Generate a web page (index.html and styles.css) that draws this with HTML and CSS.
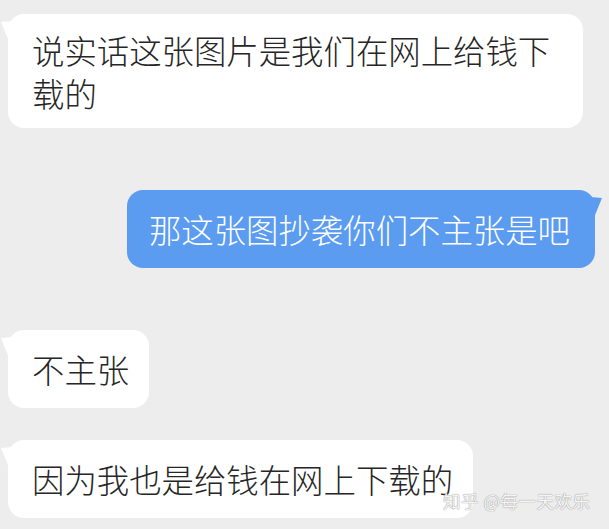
FILE: index.html
```html
<!DOCTYPE html>
<html lang="zh-CN">
<head>
    <meta charset="UTF-8">
    <meta name="viewport" content="width=device-width, initial-scale=1.0">
    <title>聊天记录</title>
    <link rel="stylesheet" href="styles.css">
</head>
<body>
    <div id="chat">
        <div class="row left">
            <div class="bubble multi">说实话这张图片是我们在网上给钱下载的</div>
        </div>
        <div class="row right">
            <div class="bubble">那这张图抄袭你们不主张是吧</div>
        </div>
        <div class="row left">
            <div class="bubble">不主张</div>
        </div>
        <div class="row left follow">
            <div class="bubble">因为我也是给钱在网上下载的</div>
        </div>
    </div>
    <div class="watermark">知乎 @每一天欢乐</div>
</body>
</html>
```

FILE: styles.css
```css
/* styles.css */
body {
    margin: 0;
    background-color: #ededed;
    font-family: "Noto Sans CJK SC", "Noto Sans", sans-serif;
    overflow: hidden;
}

#chat {
    display: flex;
    flex-direction: column;
    padding: 14px 14px 0 8px;
}

.row {
    display: flex;
    margin-top: 62px;
}

.row:first-child {
    margin-top: 0;
}

.row.follow {
    margin-top: 32px;
}

.row.right {
    justify-content: flex-end;
}

.bubble {
    position: relative;
    box-sizing: border-box;
    max-width: 575px;
    padding: 17px 20px 18px 24px;
    border-radius: 16px;
    font-size: 32.4px;
    font-weight: 300;
    line-height: 43px;
    color: #262626;
    background-color: #ffffff;
}

.bubble.multi {
    padding-top: 14px;
    padding-bottom: 14px;
}

.left .bubble::before {
    content: "";
    position: absolute;
    left: -7px;
    top: 7px;
    width: 12px;
    height: 30px;
    background-color: #ffffff;
    clip-path: path('M0,1 L12,0 L12,30 Q6,16 0,1 Z');
}

.right .bubble {
    padding: 17px 25px 18px 22px;
    color: #ffffff;
    background-color: #5b9cf0;
}

.right .bubble::after {
    content: "";
    position: absolute;
    right: -7px;
    top: 7px;
    width: 12px;
    height: 30px;
    background-color: #5b9cf0;
    clip-path: path('M12,1 L0,0 L0,30 Q6,16 12,1 Z');
}

.watermark {
    position: absolute;
    left: 443px;
    top: 489px;
    font-size: 17.5px;
    line-height: 24px;
    letter-spacing: 0.5px;
    color: rgba(255, 255, 255, 0.92);
    text-shadow: 0 0 1px #9a9a9a, 0 0 1px #9a9a9a;
}
```
